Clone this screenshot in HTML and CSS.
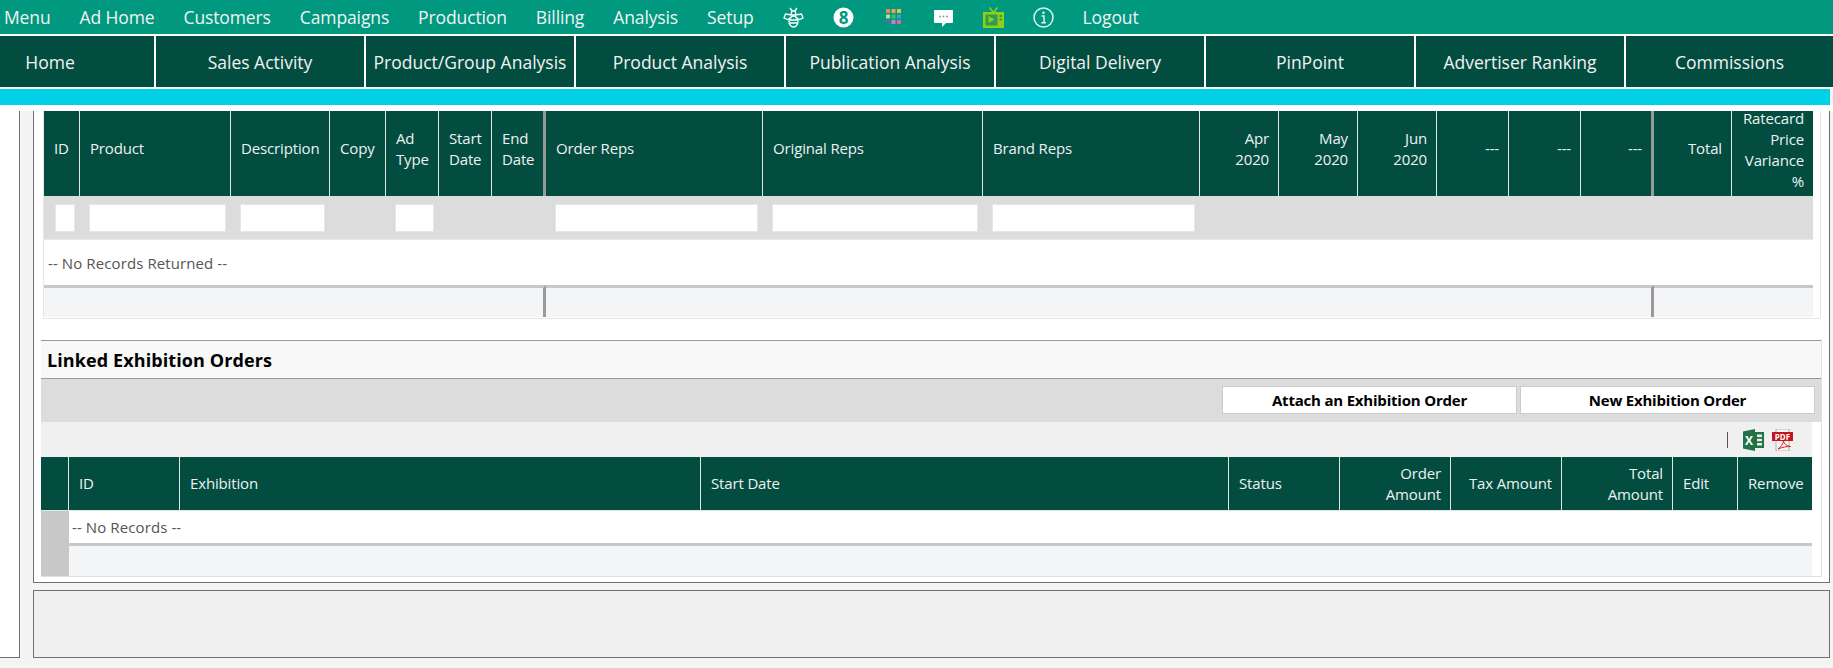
FILE: index.html
```html
<!DOCTYPE html>
<html lang="en">
<head>
  <meta charset="UTF-8">
  <title>Linked Exhibition Orders</title>
  <link rel="stylesheet" href="styles.css">
</head>
<body>
  <div class="top-menu">
    <a class="menu-item">Menu</a>
    <a class="menu-item">Ad Home</a>
    <a class="menu-item">Customers</a>
    <a class="menu-item">Campaigns</a>
    <a class="menu-item">Production</a>
    <a class="menu-item">Billing</a>
    <a class="menu-item">Analysis</a>
    <a class="menu-item">Setup</a>
    <svg class="menu-icon" viewBox="0 0 21 21" fill="none" stroke="#fff" stroke-width="1.3">
      <path d="M7 1l2.500 3.500M14 1l-2.500 3.500"/>
      <circle cx="10.500" cy="6" r="2.200"/>
      <path d="M9 8L2.500 7 1 11l3.500 1.500L8.500 10.500M12 8l6.500-1L20 11l-3.500 1.500-4-2"/>
      <ellipse cx="10.500" cy="14.500" rx="4.500" ry="5.500"/>
      <path d="M6.300 13h8.400M6.300 16h8.400"/>
    </svg>
    <svg class="menu-icon" viewBox="0 0 21 21">
      <circle cx="10.500" cy="10.500" r="10" fill="#fff"/>
      <text x="10.500" y="16.500" text-anchor="middle" class="badge-num">8</text>
    </svg>
    <svg class="menu-icon" viewBox="0 0 21 21">
      <rect x="3" y="2" width="4" height="4" fill="#e88a6a"/>
      <rect x="8.500" y="2" width="4" height="4" fill="#f0a050"/>
      <rect x="14" y="2" width="4" height="4" fill="#eec040"/>
      <rect x="3" y="7.500" width="4" height="4" fill="#b8dc90"/>
      <rect x="8.500" y="7.500" width="4" height="4" fill="#3cc060"/>
      <rect x="14" y="7.500" width="4" height="4" fill="#3aa0d8"/>
      <rect x="3" y="13" width="4" height="4" fill="#4a70b0"/>
      <rect x="8.500" y="13" width="4" height="4" fill="#c080d0"/>
      <rect x="14" y="13" width="4" height="4" fill="#e860a0"/>
    </svg>
    <svg class="menu-icon" viewBox="0 0 21 21">
      <path d="M2 3h17a1 1 0 0 1 1 1v11a1 1 0 0 1-1 1h-6l-4 4v-4H2a1 1 0 0 1-1-1V4a1 1 0 0 1 1-1z" fill="#fff"/>
      <circle cx="7" cy="9.500" r="0.900" fill="#7a9a94"/>
      <circle cx="10.500" cy="9.500" r="0.900" fill="#7a9a94"/>
      <circle cx="14" cy="9.500" r="0.900" fill="#7a9a94"/>
    </svg>
    <svg class="menu-icon" viewBox="0 0 21 21">
      <path d="M6.500 0.500l4 5 4-5" fill="none" stroke="#8fd016" stroke-width="1.500"/>
      <rect x="0" y="5" width="21" height="16" fill="#8fd016"/>
      <rect x="2.500" y="7.500" width="12" height="11" fill="#2f9a55"/>
      <path d="M5.500 9v7l6-3.500z" fill="#8fd016"/>
      <rect x="16.500" y="8" width="2.500" height="2" fill="#2f9a55"/>
      <rect x="16.500" y="11.500" width="2.500" height="2" fill="#2f9a55"/>
    </svg>
    <svg class="menu-icon" viewBox="0 0 21 21" fill="none" stroke="#dff2ee">
      <circle cx="10.500" cy="10.500" r="9.500" stroke-width="1.500"/>
      <circle cx="10.500" cy="5.800" r="1.300" fill="#dff2ee" stroke="none"/>
      <path d="M8.500 9h2.500v6.500M8.300 15.700h4.600" stroke-width="1.500"/>
    </svg>
    <a class="menu-item">Logout</a>
  </div>

  <div class="sub-nav">
    <a class="sub-item home-tab">Home</a>
    <a class="sub-item">Sales Activity</a>
    <a class="sub-item">Product/Group Analysis</a>
    <a class="sub-item">Product Analysis</a>
    <a class="sub-item">Publication Analysis</a>
    <a class="sub-item">Digital Delivery</a>
    <a class="sub-item">PinPoint</a>
    <a class="sub-item">Advertiser Ranking</a>
    <a class="sub-item">Commissions</a>
  </div>
  <div class="cyan-bar"></div>

  <div class="content">
    <div class="side-panel"></div>
    <div class="main-col">
      <div class="main-panel">
        <div class="grid-box">
          <table class="grid orders-grid">
            <tr class="head-row">
              <th class="c-id">ID</th>
              <th class="c-product">Product</th>
              <th class="c-desc">Description</th>
              <th class="c-copy">Copy</th>
              <th class="c-type">Ad Type</th>
              <th class="c-date">Start Date</th>
              <th class="c-end thick">End Date</th>
              <th class="c-rep1">Order Reps</th>
              <th class="c-rep2">Original Reps</th>
              <th class="c-rep3">Brand Reps</th>
              <th class="c-month num">Apr<br>2020</th>
              <th class="c-month num">May<br>2020</th>
              <th class="c-month num">Jun<br>2020</th>
              <th class="c-blank num">---</th>
              <th class="c-blank num">---</th>
              <th class="c-blank2 num thick">---</th>
              <th class="c-total num">Total</th>
              <th class="c-var num"><span class="var-label">Ratecard Price Variance %</span></th>
            </tr>
            <tr class="filter-row">
              <td><input class="filter"></td>
              <td><input class="filter"></td>
              <td><input class="filter"></td>
              <td></td>
              <td><input class="filter"></td>
              <td></td>
              <td></td>
              <td><input class="filter"></td>
              <td><input class="filter"></td>
              <td><input class="filter"></td>
              <td colspan="8"></td>
            </tr>
            <tr class="empty-row">
              <td colspan="18">-- No Records Returned --</td>
            </tr>
            <tr class="foot-row">
              <td colspan="7" class="thick"></td>
              <td colspan="9" class="thick"></td>
              <td colspan="2"></td>
            </tr>
          </table>
        </div>

        <div class="linked">
          <h2 class="section-title">Linked Exhibition Orders</h2>
          <div class="action-band">
            <button class="action-btn">Attach an Exhibition Order</button>
            <button class="action-btn">New Exhibition Order</button>
          </div>
          <div class="export-bar">
            <span class="export-sep"></span>
            <svg class="export-icon" viewBox="0 0 21 22">
              <path d="M0 2.500L12 0v22L0 19.500z" fill="#217346"/>
              <text x="6" y="15.500" text-anchor="middle" class="xl-letter">X</text>
              <path d="M12 3h9v16h-9z" fill="#217346"/>
              <path d="M14 5.500h5v2.500h-5zM14 9.800h5v2.500h-5zM14 14h5v2.500h-5z" fill="#f0f0f0"/>
            </svg>
            <svg class="export-icon" viewBox="0 0 21 22">
              <path d="M4 0h13v22H4z" fill="#f6f6f6" stroke="#999" stroke-width="0.700"/>
              <rect x="0" y="3" width="21" height="9" fill="#c4161c"/>
              <text x="10.500" y="10.800" text-anchor="middle" class="pdf-letters">PDF</text>
              <path d="M6 20c3-2 5-5 5.500-8 .5 3 3 5 7 5.500-3.500 0-8 .5-12.500 2.500z" fill="none" stroke="#d22" stroke-width="1"/>
            </svg>
          </div>
          <table class="grid exhibit-grid">
            <tr class="head-row">
              <th class="e-mark"></th>
              <th class="e-id">ID</th>
              <th class="e-name">Exhibition</th>
              <th class="e-date">Start Date</th>
              <th class="e-amt">Status</th>
              <th class="e-amt num">Order<br>Amount</th>
              <th class="e-amt num">Tax Amount</th>
              <th class="e-amt num">Total<br>Amount</th>
              <th class="e-edit">Edit</th>
              <th class="e-remove">Remove</th>
            </tr>
            <tr class="empty-row">
              <td class="mark-cell"></td>
              <td colspan="9">-- No Records --</td>
            </tr>
            <tr class="foot-row">
              <td class="mark-cell"></td>
              <td colspan="9"></td>
            </tr>
          </table>
        </div>
      </div>
      <div class="bottom-panel"></div>
    </div>
  </div>
</body>
</html>
```

FILE: styles.css
```css
* {
  box-sizing: border-box;
}
html, body {
  height: 668px;
  overflow: hidden;
}
body {
  margin: 0;
  background: #f4f4f4;
  font-family: "Open Sans", "Noto Sans", sans-serif;
}

/* top green menu */
.top-menu {
  display: flex;
  align-items: center;
  gap: 29px;
  height: 34px;
  padding-left: 4px;
  background: #009980;
}
.menu-item {
  color: #f2f2f2;
  font-size: 17.500px;
  letter-spacing: -0.120px;
}
.menu-icon {
  width: 21px;
  height: 21px;
  flex: none;
}
.badge-num {
  font-size: 17px;
  font-weight: 700;
  fill: #009980;
}

/* second row tabs */
.sub-nav {
  display: flex;
  gap: 2px;
  height: 55px;
  padding: 2px 0;
  background: #fff;
}
.sub-item {
  flex: 0 0 208px;
  display: flex;
  align-items: center;
  justify-content: center;
  background: #024d40;
  color: #f2f2f2;
  font-size: 17.500px;
}
.home-tab {
  flex-basis: 154px;
  padding-right: 54px;
}
.sub-item:last-child {
  flex: 1;
}
.cyan-bar {
  height: 16px;
  width: 1830px;
  background: #00d1e6;
}

/* page body */
.content {
  display: flex;
  height: 557px;
  padding-top: 6px;
  background: linear-gradient(#fff 6px, #f4f4f4 6px);
}
.side-panel {
  width: 20px;
  height: 547px;
  background: #fff;
  border-right: 1px solid #707070;
  border-bottom: 1px solid #707070;
}
.main-col {
  margin-left: 13px;
  width: 1797px;
}
.main-panel {
  height: 472px;
  padding: 0 8px 0 7px;
  background: #fff;
  border: 1px solid #707070;
  border-top: 0;
}
.bottom-panel {
  height: 68px;
  margin-top: 7px;
  background: #f0f0f0;
  border: 1px solid #707070;
}

/* tables */
.grid {
  border-collapse: separate;
  border-spacing: 0;
  table-layout: fixed;
}
.grid-box {
  width: 1778px;
  height: 208px;
  margin-left: 2px;
  padding-right: 8px;
  border: 1px solid #e6e6e6;
  border-top: 0;
}
.orders-grid {
  width: 1768px;
}
.head-row th {
  padding: 0 9px 0 10px;
  background: #024d40;
  color: #eef2f1;
  font-size: 15px;
  font-weight: 400;
  line-height: 21px;
  text-align: left;
  letter-spacing: -0.150px;
  border-right: 1px solid #dfe6e4;
}
.head-row th:last-child {
  border-right: 0;
}
.head-row th.num {
  text-align: right;
}
.orders-grid .head-row th {
  height: 85px;
  padding-bottom: 10px;
}
.orders-grid .head-row th.c-var {
  padding-bottom: 0;
}
.var-label {
  display: block;
  margin-top: -7px;
}
.grid th.thick {
  border-right: 3px solid #999;
}
.c-id { width: 36px; }
.c-product { width: 151px; }
.c-desc { width: 99px; }
.c-copy { width: 56px; }
.c-type { width: 53px; }
.c-date { width: 53px; }
.c-end { width: 54px; }
.c-rep1 { width: 217px; }
.c-rep2 { width: 220px; }
.c-rep3 { width: 217px; }
.c-month { width: 79px; }
.c-blank { width: 72px; }
.c-blank2 { width: 73px; }
.c-total { width: 78px; }
.c-var { width: 81px; }

.filter-row td {
  height: 44px;
  padding: 0 5px 0 9px;
  background: #dcdcdc;
  border-bottom: 1px solid #e8e8e8;
}
.filter-row td:first-child {
  padding-left: 11px;
}
.filter {
  display: block;
  width: 100%;
  height: 28px;
  padding: 0;
  background: #fff;
  border: 1px solid #e6e6e6;
}
.empty-row td {
  height: 45px;
  padding-left: 4px;
  background: #fff;
  color: #555;
  font-size: 15px;
  letter-spacing: 0.100px;
}
.foot-row td {
  height: 32px;
  background: #f4f5f7;
  border-top: 3px solid #c8c8c8;
}
.foot-row td.thick {
  border-right: 3px solid #999;
}

/* linked exhibition orders */
.linked {
  width: 1781px;
  height: 237px;
  margin-top: 21px;
  border-right: 1px solid #e0e0e0;
  border-bottom: 1px solid #e0e0e0;
}
.section-title {
  height: 39px;
  margin: 0;
  padding-left: 6px;
  background: #f8f8f8;
  border-top: 1px solid #999;
  border-bottom: 1px solid #999;
  color: #000;
  font-size: 18px;
  font-weight: 700;
  line-height: 39px;
  letter-spacing: 0.100px;
}
.action-band {
  display: flex;
  justify-content: flex-end;
  gap: 3px;
  height: 43px;
  padding: 7px 6px 0 0;
  background: #dcdcdc;
}
.action-btn {
  width: 295px;
  height: 28px;
  padding: 0;
  background: #fff;
  border: 1px solid #ccc;
  color: #000;
  font-family: inherit;
  font-size: 15px;
  font-weight: 700;
  letter-spacing: -0.200px;
}
.export-bar {
  display: flex;
  align-items: center;
  justify-content: flex-end;
  width: 1771px;
  height: 35px;
  padding-right: 19px;
  background: #f0f0f0;
}
.export-sep {
  width: 1px;
  height: 16px;
  margin-right: 15px;
  background: #555;
}
.export-icon {
  width: 21px;
  height: 22px;
  margin-left: 8px;
}
.export-sep + .export-icon {
  margin-left: 0;
}
.xl-letter {
  font-size: 12px;
  font-weight: 700;
  fill: #fff;
}
.pdf-letters {
  font-size: 8px;
  font-weight: 700;
  fill: #fff;
}
.exhibit-grid {
  width: 1771px;
}
.exhibit-grid .head-row th {
  height: 54px;
  border-bottom: 1px solid #e4e8e7;
}
.e-mark { width: 28px; }
.e-id { width: 111px; }
.e-name { width: 521px; }
.e-date { width: 528px; }
.e-amt { width: 111px; }
.e-edit { width: 65px; }
.e-remove { width: 74px; }
.exhibit-grid .empty-row td {
  height: 32px;
  padding-left: 3px;
}
.exhibit-grid .foot-row td {
  height: 33px;
}
.grid td.mark-cell {
  background: #c8c8c8;
  border-top: 0;
}
```
